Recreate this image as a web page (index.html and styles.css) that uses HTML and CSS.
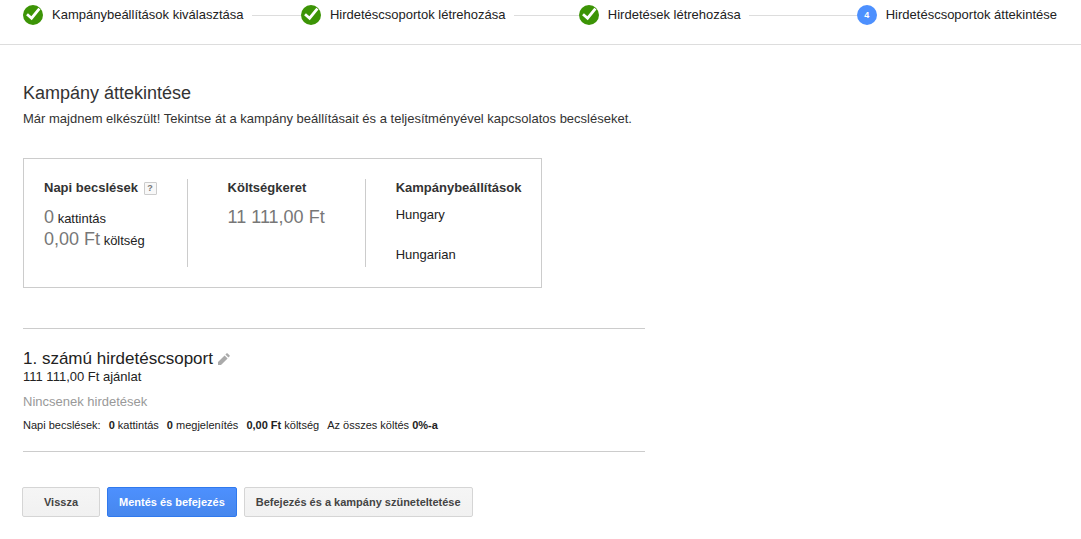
FILE: index.html
```html
<!DOCTYPE html>
<html lang="hu">
<head>
  <meta charset="UTF-8">
  <meta name="viewport" content="width=device-width, initial-scale=1.0">
  <title>Kampány áttekintése</title>
  <link rel="stylesheet" href="styles.css">
</head>
<body>
  <header>
    <ol class="steps">
      <li class="step">
        <svg class="step-icon" viewBox="0 0 20 20" aria-hidden="true">
          <circle cx="10" cy="10" r="10" fill="#3c9406"/>
          <path d="M4 9.2L8.6 13.2L16.4 3.6" fill="none" stroke="#fff" stroke-width="2.8"/>
        </svg>
        <span>Kampánybeállítások kiválasztása</span>
      </li>
      <li class="step">
        <svg class="step-icon" viewBox="0 0 20 20" aria-hidden="true">
          <circle cx="10" cy="10" r="10" fill="#3c9406"/>
          <path d="M4 9.2L8.6 13.2L16.4 3.6" fill="none" stroke="#fff" stroke-width="2.8"/>
        </svg>
        <span>Hirdetéscsoportok létrehozása</span>
      </li>
      <li class="step">
        <svg class="step-icon" viewBox="0 0 20 20" aria-hidden="true">
          <circle cx="10" cy="10" r="10" fill="#3c9406"/>
          <path d="M4 9.2L8.6 13.2L16.4 3.6" fill="none" stroke="#fff" stroke-width="2.8"/>
        </svg>
        <span>Hirdetések létrehozása</span>
      </li>
      <li class="step current">
        <span class="step-icon step-number">4</span>
        <span>Hirdetéscsoportok áttekintése</span>
      </li>
    </ol>
  </header>

  <main>
    <h1>Kampány áttekintése</h1>
    <p class="intro">Már majdnem elkészült! Tekintse át a kampány beállításait és a teljesítményével kapcsolatos becsléseket.</p>

    <section class="summary">
      <div class="summary-col estimates">
        <h2>Napi becslések <button type="button" class="help">?</button></h2>
        <p><span class="amount">0</span> kattintás</p>
        <p><span class="amount">0,00 Ft</span> költség</p>
      </div>
      <div class="summary-col budget">
        <h2>Költségkeret</h2>
        <p><span class="amount">11 111,00 Ft</span></p>
      </div>
      <div class="summary-col settings">
        <h2>Kampánybeállítások</h2>
        <p>Hungary</p>
        <p>Hungarian</p>
      </div>
    </section>

    <section class="ad-group">
      <h2>1. számú hirdetéscsoport
        <button type="button" class="edit" aria-label="Szerkesztés">
          <svg viewBox="0 0 12 12" aria-hidden="true">
            <path d="M0 12V9L6.6 2.4L9.6 5.4L3 12Z M7.4 1.6L8.7 0.3Q9 0 9.4 0.3L11.7 2.6Q12 3 11.7 3.3L10.4 4.6Z" fill="#aaa"/>
          </svg>
        </button>
      </h2>
      <p class="bid">111 111,00 Ft ajánlat</p>
      <p class="no-ads">Nincsenek hirdetések</p>
      <p class="stats">
        <span>Napi becslések:</span>
        <span><b>0</b> kattintás</span>
        <span><b>0</b> megjelenítés</span>
        <span><b>0,00 Ft</b> költség</span>
        <span>Az összes költés <b>0%-a</b></span>
      </p>
    </section>

    <div class="actions">
      <button type="button" class="btn back">Vissza</button>
      <button type="button" class="btn primary">Mentés és befejezés</button>
      <button type="button" class="btn">Befejezés és a kampány szüneteltetése</button>
    </div>
  </main>
</body>
</html>
```
FILE: styles.css
```css
body {
  margin: 0;
  font-family: "Liberation Sans", Arial, sans-serif;
  font-size: 13px;
  line-height: 20px;
  color: #222;
  background: #fff;
}
h1, h2, p, ol {
  margin: 0;
  padding: 0;
}
header {
  padding: 5px 24px 19px 23px;
  border-bottom: 1px solid #ddd;
}
.steps {
  display: flex;
  list-style: none;
}
.step {
  display: flex;
  align-items: center;
  flex: 1;
  white-space: nowrap;
}
.step::after {
  content: "";
  flex: 1;
  height: 1px;
  margin-left: 8px;
  background: #ddd;
}
.step.current {
  flex: none;
}
.step.current::after {
  display: none;
}
.step-icon {
  flex: none;
  width: 20px;
  height: 20px;
  margin-right: 9px;
}
.step-number {
  border-radius: 50%;
  background: #4d90fe;
  color: #fff;
  font-size: 9px;
  font-weight: bold;
  text-align: center;
}
main {
  padding: 36px 22px 22px;
}
h1 {
  margin-left: 1px;
  font-size: 18px;
  font-weight: normal;
  line-height: 24px;
  color: #333;
}
.intro {
  margin: 4px 0 29px 1px;
  color: #333;
}
.summary {
  display: flex;
  width: fit-content;
  margin-left: 1px;
  padding: 20px;
  border: 1px solid #ccc;
}
.summary-col {
  box-sizing: border-box;
  min-height: 88px;
  border-right: 1px solid #ccc;
}
.summary h2 {
  font-size: 13px;
  line-height: 18px;
  color: #333;
}
.estimates {
  padding-right: 30px;
}
.estimates h2,
.budget h2 {
  margin-bottom: 10px;
}
.estimates p,
.budget p {
  line-height: 20px;
}
.budget {
  padding: 0 40px;
}
.settings {
  padding-left: 30px;
  border-right: 0;
}
.settings h2 {
  margin-bottom: 8px;
}
.settings p + p {
  margin-top: 20px;
}
.amount {
  font-size: 18px;
  color: #777;
}
.help {
  width: 13px;
  height: 13px;
  margin-left: 2px;
  padding: 0;
  border: 1px solid #ccc;
  border-radius: 1px;
  background: #f8f8f8;
  color: #777;
  font: bold 9px/11px "Liberation Sans", Arial, sans-serif;
  vertical-align: 1px;
}
.ad-group {
  max-width: 622px;
  margin: 40px 0 0 1px;
  padding: 20px 0 16px;
  border: 1px solid #ccc;
  border-width: 1px 0;
}
.ad-group h2 {
  font-size: 17px;
  font-weight: normal;
}
.edit {
  width: 12px;
  height: 12px;
  padding: 0;
  border: 0;
  background: none;
  vertical-align: -1px;
}
.edit svg {
  display: block;
}
.bid {
  line-height: 16px;
}
.no-ads {
  margin-top: 7px;
  color: #999;
}
.stats {
  display: flex;
  flex-wrap: wrap;
  gap: 8px;
  margin-top: 3px;
  font-size: 11px;
}
.actions {
  display: flex;
  flex-wrap: wrap;
  gap: 7px;
  margin-top: 35px;
}
.btn {
  height: 30px;
  padding: 0 11px;
  border: 1px solid #d5d5d5;
  border-radius: 2px;
  background: linear-gradient(#f5f5f5, #f1f1f1);
  color: #444;
  font-family: inherit;
  font-size: 11px;
  font-weight: bold;
  cursor: pointer;
}
.btn.back {
  min-width: 78px;
}
.btn.primary {
  border-color: #3079ed;
  background: linear-gradient(#4d90fe, #4787ed);
  color: #fff;
}
```
